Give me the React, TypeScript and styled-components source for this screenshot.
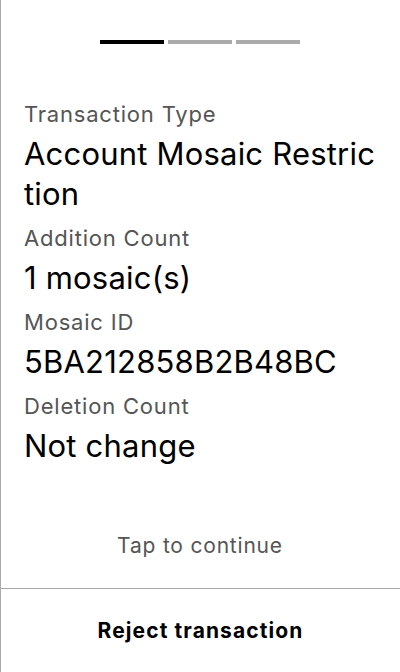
import React from "react";
import styled, { createGlobalStyle } from "styled-components";

const Global = createGlobalStyle`
  html, body { margin: 0; padding: 0; background: #fff; }
  body { font-family: Inter, "Noto Sans", sans-serif; -webkit-font-smoothing: antialiased; }
  * { box-sizing: border-box; }
`;

const Screen = styled.div`
  width: 400px;
  height: 672px;
  display: flex;
  flex-direction: column;
  border-left: 1px solid #aaaaaa;
  background: #fff;
`;

const Body = styled.div`
  flex: 1;
  display: flex;
  flex-direction: column;
  padding: 0 24px 0 23px;
`;

const Progress = styled.div`
  display: flex;
  justify-content: center;
  gap: 4px;
  margin-top: 40px;
  margin-bottom: 54px;
`;

const Step = styled.div<{ $active?: boolean }>`
  width: 64px;
  height: 4px;
  background: ${(p) => (p.$active ? "#000" : "#aaaaaa")};
`;

const Field = styled.div`
  display: flex;
  flex-direction: column;
`;

const Label = styled.div`
  font-size: 22px;
  line-height: 32px;
  margin-bottom: 4px;
  letter-spacing: 0.8px;
  color: #555555;
`;

const Value = styled.div`
  font-size: 31px;
  line-height: 40px;
  letter-spacing: 0.2px;
  color: #000;
  word-break: break-all;
  margin-bottom: 8px;
`;

const Hint = styled.div`
  margin-top: auto;
  text-align: center;
  font-size: 21px;
  line-height: 28px;
  letter-spacing: 0.8px;
  color: #555555;
  padding-bottom: 28px;
`;

const Footer = styled.button`
  height: 84px;
  border: none;
  border-top: 1px solid #aaaaaa;
  background: #fff;
  font-family: inherit;
  font-size: 21px;
  font-weight: 700;
  letter-spacing: 1.1px;
  color: #000;
  display: flex;
  align-items: center;
  justify-content: center;
  padding: 0;
`;

const fields = [
  { label: "Transaction Type", value: "Account Mosaic Restriction" },
  { label: "Addition Count", value: "1 mosaic(s)" },
  { label: "Mosaic ID", value: "5BA212858B2B48BC" },
  { label: "Deletion Count", value: "Not change" },
];

export default function App() {
  return (
    <>
      <Global />
      <Screen>
        <Body>
          <Progress>
            <Step $active />
            <Step />
            <Step />
          </Progress>
          {fields.map((f) => (
            <Field key={f.label}>
              <Label>{f.label}</Label>
              <Value>{f.value}</Value>
            </Field>
          ))}
          <Hint>Tap to continue</Hint>
        </Body>
        <Footer>Reject transaction</Footer>
      </Screen>
    </>
  );
}
